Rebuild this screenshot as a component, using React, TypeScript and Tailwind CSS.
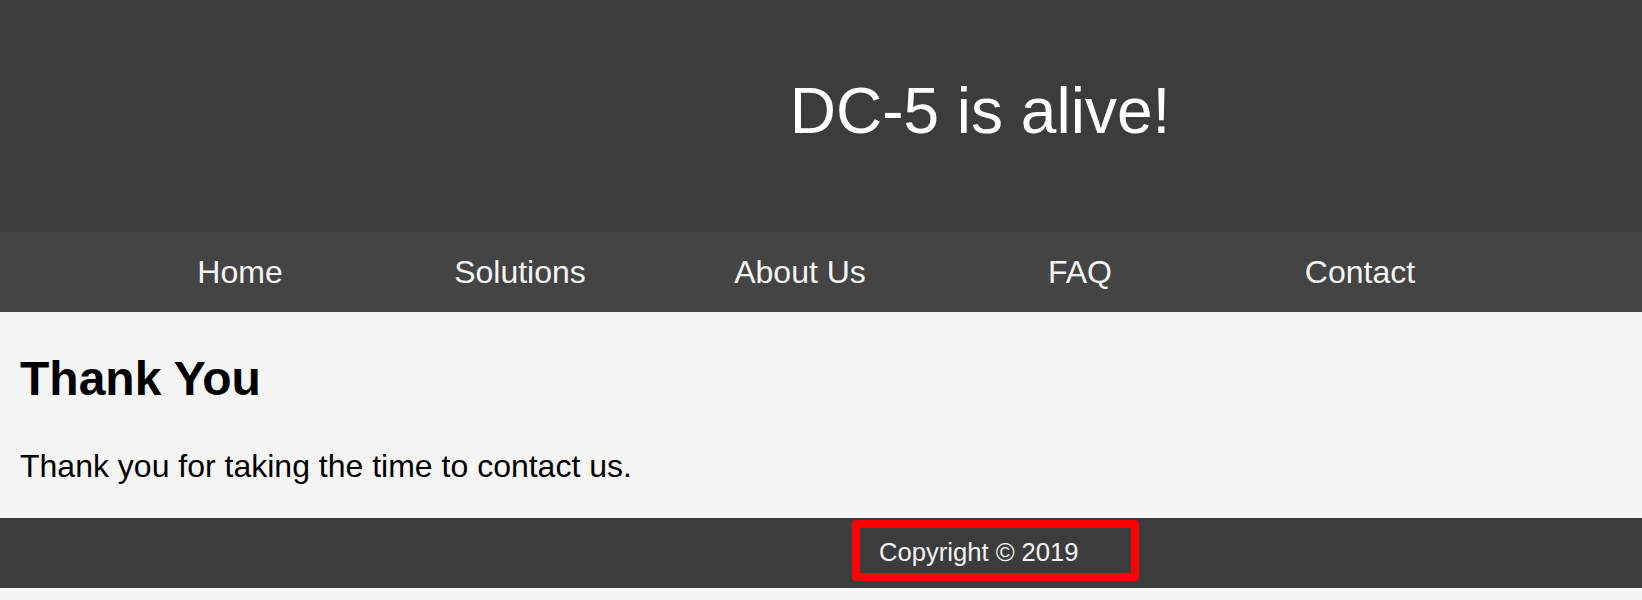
const links = ["Home", "Solutions", "About Us", "FAQ", "Contact"];

export default function App() {
  return (
    <div className="min-h-[600px] bg-[#f5f5f5] font-['Liberation_Sans',Arial,sans-serif]">
      <header className="h-[232px] bg-[#3c3c3c] pt-[79px] pl-[318px] text-center">
        <h1 className="text-[64px] leading-[64px] text-white">DC-5 is alive!</h1>
      </header>
      <nav className="h-[80px] bg-[#444444]">
        <ul className="flex pl-[100px]">
          {links.map((link) => (
            <li key={link} className="w-[280px] text-center">
              <a href="#" className="text-[32px] leading-[80px] text-[#f5f5f5]">
                {link}
              </a>
            </li>
          ))}
        </ul>
      </nav>
      <main className="h-[206px] px-[20px] pt-[43px] text-black">
        <h2 className="text-[48px] font-bold leading-[48px]">Thank You</h2>
        <p className="mt-[47px] text-[32px] leading-[32px]">
          Thank you for taking the time to contact us.
        </p>
      </main>
      <footer className="h-[70px] bg-[#3c3c3c] pt-[2px]">
        <div className="ml-[852px] h-[61px] w-[287px] rounded-[4px] border-[8px] border-[#ff0000] pl-[19px] pt-[4px]">
          <p className="text-[25.6px] leading-[41px] text-[#f5f5f5]">Copyright © 2019</p>
        </div>
      </footer>
    </div>
  );
}
